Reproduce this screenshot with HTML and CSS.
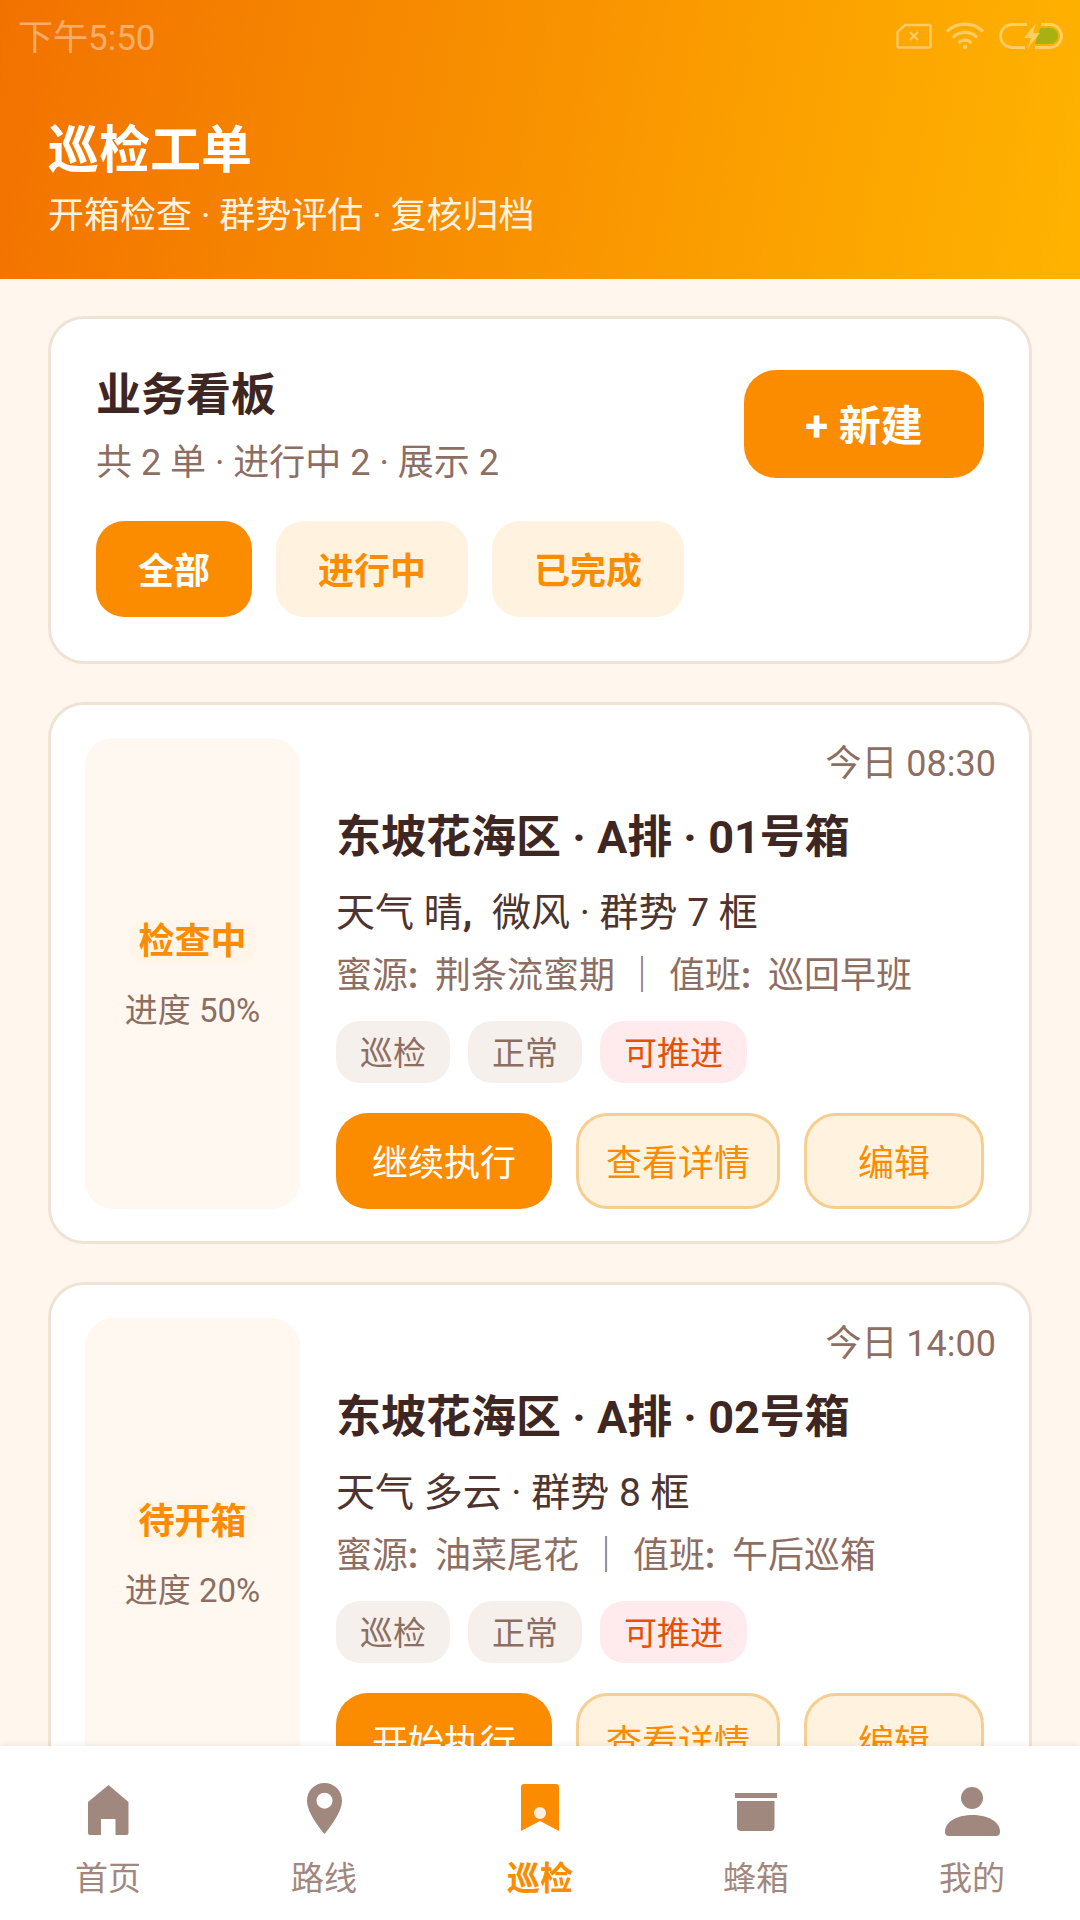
FILE: index.html
```html
<!DOCTYPE html>
<html lang="zh-CN">
<head>
    <meta charset="UTF-8">
    <meta name="viewport" content="width=device-width, initial-scale=1.0">
    <title>巡检工单</title>
    <link rel="stylesheet" href="styles.css">
</head>
<body>
    <div class="app">
        <header class="hero">
            <div class="status-bar">
                <span class="status-time">下午5:50</span>
                <div class="status-icons">
                    <svg width="36" height="26" viewBox="0 0 36 26" fill="none" stroke="#fff" stroke-width="2.4">
                        <path d="M9 2H33a1.500 1.500 0 0 1 1.500 1.500V23a1.500 1.500 0 0 1-1.500 1.500H3a1.500 1.500 0 0 1-1.500-1.500V9Z"/>
                        <path d="M14 9l8 8M22 9l-8 8"/>
                    </svg>
                    <svg width="38" height="28" viewBox="0 0 38 28" fill="none" stroke="#fff" stroke-width="3.400" stroke-linecap="round">
                        <path d="M2 8.500C11 0 27 0 36 8.500"/>
                        <path d="M8 14.500C14 9 24 9 30 14.500"/>
                        <path d="M13.500 20C16.500 17.500 21.500 17.500 24.500 20"/>
                        <circle cx="19" cy="25" r="1.500" fill="#fff" stroke-width="1.500"/>
                    </svg>
                    <svg width="66" height="28" viewBox="0 0 66 28" fill="none">
                        <path d="M29 2.500H14a11 11 0 0 0 0 23H27M43 2.500H52a11 11 0 0 1 0 23H37" stroke="#fff" stroke-width="2.800"/>
                        <path d="M42 6H52a8 8 0 0 1 0 16H37Z" fill="#2ab532" stroke="none"/>
                        <path d="M38 1L26 16H33L29 27L42 11H35Z" fill="#fff"/>
                    </svg>
                </div>
            </div>
            <h1 class="hero-title">巡检工单</h1>
            <p class="hero-sub">开箱检查 · 群势评估 · 复核归档</p>
        </header>

        <main class="content">
            <section class="card board">
                <div class="board-top">
                    <div>
                        <h2 class="board-title">业务看板</h2>
                        <p class="board-sub">共 2 单 · 进行中 2 · 展示 2</p>
                    </div>
                    <button class="btn-new">+ 新建</button>
                </div>
                <div class="filters">
                    <button class="filter active">全部</button>
                    <button class="filter">进行中</button>
                    <button class="filter">已完成</button>
                </div>
            </section>

            <section class="card order">
                <div class="order-side">
                    <span class="order-state">检查中</span>
                    <span class="order-progress">进度 50%</span>
                </div>
                <div class="order-main">
                    <div class="order-time">今日 08:30</div>
                    <h3 class="order-title">东坡花海区 · A排 · 01号箱</h3>
                    <p class="order-weather">天气 晴<span class="punct">,</span> 微风 · 群势 7 框</p>
                    <p class="order-meta">蜜源<span class="punct">:</span> 荆条流蜜期 ｜ 值班<span class="punct">:</span> 巡回早班</p>
                    <div class="tags">
                        <span class="tag">巡检</span>
                        <span class="tag">正常</span>
                        <span class="tag tag-go">可推进</span>
                    </div>
                    <div class="actions">
                        <button class="act act-main">继续执行</button>
                        <button class="act act-detail">查看详情</button>
                        <button class="act act-edit">编辑</button>
                    </div>
                </div>
            </section>

            <section class="card order">
                <div class="order-side">
                    <span class="order-state">待开箱</span>
                    <span class="order-progress">进度 20%</span>
                </div>
                <div class="order-main">
                    <div class="order-time">今日 14:00</div>
                    <h3 class="order-title">东坡花海区 · A排 · 02号箱</h3>
                    <p class="order-weather">天气 多云 · 群势 8 框</p>
                    <p class="order-meta">蜜源<span class="punct">:</span> 油菜尾花 ｜ 值班<span class="punct">:</span> 午后巡箱</p>
                    <div class="tags">
                        <span class="tag">巡检</span>
                        <span class="tag">正常</span>
                        <span class="tag tag-go">可推进</span>
                    </div>
                    <div class="actions">
                        <button class="act act-main">开始执行</button>
                        <button class="act act-detail">查看详情</button>
                        <button class="act act-edit">编辑</button>
                    </div>
                </div>
            </section>
        </main>

        <nav class="tabbar">
            <div class="tab">
                <svg width="60" height="60" viewBox="0 0 60 60"><path d="M30.500 5L50.500 22V53a2 2 0 0 1-2 2H37.500V39H23V55H12a2 2 0 0 1-2-2V22Z" fill="#a1887f"/></svg>
                <span>首页</span>
            </div>
            <div class="tab">
                <svg width="60" height="60" viewBox="0 0 60 60"><path fill-rule="evenodd" d="M30.500 3C40 3 48 10.500 48 20.500C48 32 37 46 30.500 54C24 46 13 32 13 20.500C13 10.500 21 3 30.500 3ZM30.500 12.700a8 8 0 1 0 0 16a8 8 0 1 0 0-16Z" fill="#a1887f"/></svg>
                <span>路线</span>
            </div>
            <div class="tab active">
                <svg width="60" height="60" viewBox="0 0 60 60"><path d="M11 7a3 3 0 0 1 3-3H46a3 3 0 0 1 3 3V51L30 41L11 51Z" fill="#fb8c00"/><circle cx="30" cy="33" r="6" fill="#fdeee0"/></svg>
                <span>巡检</span>
            </div>
            <div class="tab">
                <svg width="60" height="60" viewBox="0 0 60 60"><path d="M9 13H51V18H9ZM11 21H48.500V47a4 4 0 0 1-4 4H15a4 4 0 0 1-4-4Z" fill="#a1887f"/></svg>
                <span>蜂箱</span>
            </div>
            <div class="tab">
                <svg width="60" height="60" viewBox="0 0 60 60"><circle cx="30" cy="18" r="11" fill="#a1887f"/><path d="M3 52C3 41 16 35 30.500 35S58 41 58 52a4 4 0 0 1-4 4H7a4 4 0 0 1-4-4Z" fill="#a1887f"/></svg>
                <span>我的</span>
            </div>
        </nav>
    </div>
</body>
</html>
```

FILE: styles.css
```css
* {
    box-sizing: border-box;
}
html, body {
    margin: 0;
    padding: 0;
}
body {
    width: 1080px;
    height: 1920px;
    overflow: hidden;
    font-family: Roboto, "Noto Sans CJK SC", sans-serif;
    background: #fff7ed;
}
h1, h2, h3, p {
    margin: 0;
    font-weight: normal;
}
button {
    font-family: inherit;
    border: none;
    padding: 0;
}
.app {
    position: relative;
    width: 1080px;
    height: 1920px;
    overflow: hidden;
}

/* header */
.hero {
    height: 279px;
    padding: 0 48px;
    background: linear-gradient(100deg, #f27200, #ffb300);
    color: #fff;
}
.status-bar {
    height: 72px;
    margin: 0 -30px;
    display: flex;
    align-items: center;
    justify-content: space-between;
    opacity: 0.4;
}
.status-time {
    padding-bottom: 4px;
    font-size: 35px;
}
.status-icons {
    display: flex;
    align-items: center;
    gap: 14px;
    margin-right: -2px;
}
.hero-title {
    margin-top: 51px;
    font-size: 51px;
    line-height: 56px;
    font-weight: bold;
}
.hero-sub {
    margin-top: 15px;
    font-size: 36px;
    line-height: 44px;
    color: #fff3e0;
}

/* cards */
.content {
    padding: 37px 48px 0;
    display: flex;
    flex-direction: column;
    gap: 38px;
}
.card {
    background: #fff;
    border: 3px solid #efe3d6;
    border-radius: 36px;
}
.board {
    height: 348px;
    padding: 49px 45px 0 45px;
}
.board-top {
    display: flex;
    justify-content: space-between;
    align-items: flex-start;
}
.board-title {
    font-size: 45px;
    line-height: 56px;
    font-weight: bold;
    color: #3e2723;
}
.board-sub {
    margin-top: 17px;
    font-size: 36px;
    line-height: 44px;
    color: #8d6e63;
}
.btn-new {
    width: 240px;
    height: 108px;
    margin-top: 2px;
    padding-bottom: 3px;
    border-radius: 32px;
    background: #fb8c00;
    color: #fff;
    font-size: 42px;
    font-weight: bold;
}
.filters {
    display: flex;
    gap: 24px;
    margin-top: 36px;
}
.filter {
    height: 96px;
    padding: 0 42px 3px;
    border-radius: 28px;
    background: #fff3e0;
    color: #fb8c00;
    font-size: 36px;
    font-weight: bold;
}
.filter.active {
    background: #fb8c00;
    color: #fff;
}

/* work orders */
.order {
    height: 542px;
    padding: 33px 33px 0 34px;
    display: flex;
    gap: 36px;
    flex-shrink: 0;
}
.order-side {
    width: 215px;
    height: 471px;
    padding-top: 3px;
    border-radius: 28px;
    background: #fff8f0;
    display: flex;
    flex-direction: column;
    align-items: center;
    justify-content: center;
}
.order-state {
    padding: 0 8px;
    border-radius: 14px;
    font-size: 36px;
    line-height: 44px;
    font-weight: bold;
    color: #fb8c00;
    background: #fff5e9;
}
.order-progress {
    margin-top: 27px;
    font-size: 33px;
    line-height: 40px;
    color: #8d6e63;
}
.order-main {
    flex: 1;
    min-width: 0;
    padding-top: 4px;
}
.order-time {
    text-align: right;
    font-size: 36px;
    line-height: 44px;
    color: #8d6e63;
}
.order-title {
    margin-top: 22px;
    font-size: 45px;
    line-height: 60px;
    font-weight: bold;
    color: #3e2723;
}
.order-weather {
    margin-top: 21px;
    font-size: 39px;
    line-height: 48px;
    color: #4e342e;
}
.order-meta {
    margin-top: 17px;
    font-size: 36px;
    line-height: 44px;
    color: #8d6e63;
}
.punct {
    margin-right: 10px;
    font-weight: bold;
}
.order-meta .punct {
    margin-right: 8px;
}
.tags {
    display: flex;
    gap: 18px;
    margin-top: 23px;
}
.tag {
    height: 62px;
    padding: 0 24px;
    border-radius: 24px;
    background: #f5f0eb;
    color: #8d6e63;
    font-size: 33px;
    line-height: 66px;
}
.tag-go {
    background: #ffebee;
    color: #e65100;
}
.actions {
    display: flex;
    gap: 24px;
    margin-top: 30px;
}
.act {
    height: 96px;
    padding-bottom: 3px;
    border-radius: 32px;
    font-size: 36px;
}
.act-main {
    width: 216px;
    background: #fb8c00;
    color: #fff;
}
.act-detail, .act-edit {
    background: #fff3e0;
    color: #fb8c00;
    border: 3px solid #f6cf90;
}
.act-detail {
    width: 204px;
}
.act-edit {
    width: 180px;
}

/* bottom nav */
.tabbar {
    position: absolute;
    left: 0;
    right: 0;
    bottom: 0;
    height: 174px;
    padding-top: 34px;
    display: flex;
    background: #fff;
    box-shadow: 0 -2px 6px rgba(0, 0, 0, 0.06);
}
.tab {
    flex: 1;
    display: flex;
    flex-direction: column;
    align-items: center;
    color: #a1887f;
    font-size: 33px;
    line-height: 42px;
}
.tab svg {
    display: block;
}
.tab span {
    margin-top: 18px;
}
.tab.active {
    color: #fb8c00;
    font-weight: bold;
}
```
